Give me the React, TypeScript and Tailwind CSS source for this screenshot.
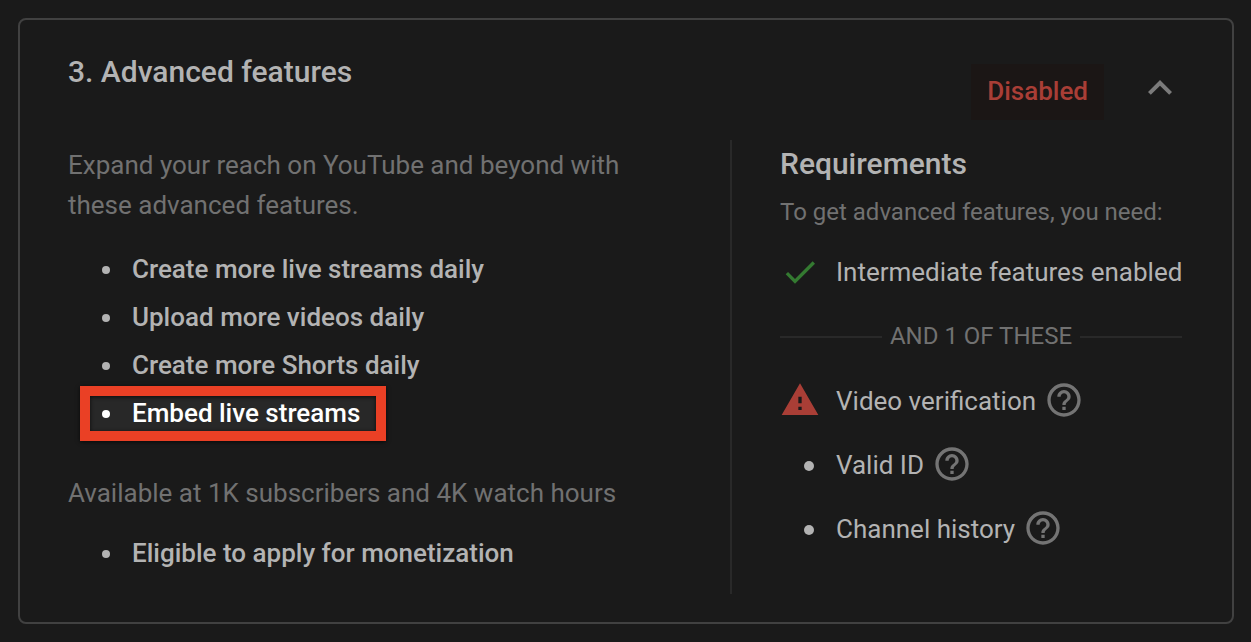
import React from "react";

const limits = [
  { label: "Create more live streams daily", highlighted: false },
  { label: "Upload more videos daily", highlighted: false },
  { label: "Create more Shorts daily", highlighted: false },
  { label: "Embed live streams", highlighted: true },
];

const options = [
  { label: "Video verification", warning: true },
  { label: "Valid ID", warning: false },
  { label: "Channel history", warning: false },
];

function Icon({ d, className }: { d: string; className: string }) {
  return (
    <svg viewBox="0 0 24 24" fill="currentColor" aria-hidden="true" className={className}>
      <path d={d} />
    </svg>
  );
}

const chevronUp = "M12 8l-6 6 1.41 1.41L12 10.83l4.59 4.58L18 14z";
const check = "M9 16.17L4.83 12l-1.42 1.41L9 19 21 7l-1.41-1.41z";
const warning = "M1 21h22L12 2 1 21zm12-3h-2v-2h2v2zm0-4h-2v-4h2v4z";
const help =
  "M11 18h2v-2h-2v2zm1-16C6.48 2 2 6.48 2 12s4.48 10 10 10 10-4.48 10-10S17.52 2 12 2zm0 18c-4.41 0-8-3.59-8-8s3.59-8 8-8 8 3.59 8 8-3.59 8-8 8zm0-14c-2.21 0-4 1.79-4 4h2c0-1.1.9-2 2-2s2 .9 2 2c0 2-3 1.75-3 5h2c0-2.25 3-2.5 3-5 0-2.21-1.79-4-4-4z";

function Feature({ label, highlighted }: { label: string; highlighted: boolean }) {
  return (
    <li
      className={
        highlighted
          ? "relative flex h-12 w-fit items-center gap-[22px] pl-[34px] text-white"
          : "flex h-12 items-center gap-[22px] pl-[34px]"
      }
    >
      {highlighted && (
        <span className="absolute -top-[3px] right-[-26px] -bottom-1 left-3 border-10 border-[#ea4025] bg-[#282828] shadow-[0_1px_4px_rgba(0,0,0,0.7),inset_0_1px_4px_rgba(0,0,0,0.7)]" />
      )}
      <span className="relative mt-[2px] size-2 rounded-full bg-current" />
      <span className="relative">{label}</span>
    </li>
  );
}

export default function App() {
  return (
    <main className="min-h-screen bg-[#1a1a1a] py-[18px] pr-[17px] pl-[18px] font-['Roboto',sans-serif] text-[26px] leading-10 text-[#b3b3b3]">
      <section className="rounded-lg border-2 border-[#414141] px-12 pt-11 pb-7">
        <header className="flex items-start justify-between">
          <h2 className="-mt-3 text-[30px] font-medium">3. Advanced features</h2>
          <div className="flex items-start gap-8">
            <span className="flex h-14 items-center bg-[#1b1615] px-4 pb-[2px] font-medium text-[#a93e36]">
              Disabled
            </span>
            <button type="button" aria-label="Collapse" className="text-[#7b7b7b]">
              <Icon d={chevronUp} className="size-12" />
            </button>
          </div>
        </header>

        <div className="mt-5 flex items-stretch">
          <div className="min-w-0 flex-1 pt-[5px] pb-[17px]">
            <p className="max-w-[600px] text-[#717171]">
              Expand your reach on YouTube and beyond with these advanced features.
            </p>
            <ul className="mt-5 font-medium">
              {limits.map((item) => (
                <Feature key={item.label} {...item} />
              ))}
            </ul>
            <p className="mt-9 text-[#717171]">Available at 1K subscribers and 4K watch hours</p>
            <ul className="mt-4 font-medium">
              <Feature label="Eligible to apply for monetization" highlighted={false} />
            </ul>
          </div>

          <div className="w-[454px] shrink-0 border-l-2 border-[#292929] pt-1 pl-12">
            <h3 className="text-[30px] font-medium">Requirements</h3>
            <p className="mt-2 text-2xl leading-10 whitespace-nowrap text-[#717171]">
              To get advanced features, you need:
            </p>
            <div className="mt-5 flex h-10 items-center gap-4 whitespace-nowrap">
              <Icon d={check} className="size-10 shrink-0 text-[#347a31]" />
              Intermediate features enabled
            </div>
            <div className="mt-6 mr-[2px] flex h-10 items-center gap-2 text-2xl whitespace-nowrap text-[#717171]">
              <span className="mt-[2px] h-[2px] flex-1 bg-[#292929]" />
              AND 1 OF THESE
              <span className="mt-[2px] h-[2px] flex-1 bg-[#292929]" />
            </div>
            <ul className="mt-6 flex flex-col gap-6">
              {options.map((option) => (
                <li key={option.label} className="flex h-10 items-center">
                  <span className="mr-4 flex w-10 items-center justify-end">
                    {option.warning ? (
                      <Icon d={warning} className="size-10 text-[#a93e36]" />
                    ) : (
                      <span className="mt-1 mr-[6px] size-[10px] rounded-full bg-current" />
                    )}
                  </span>
                  <span className="pt-[2px]">{option.label}</span>
                  <button
                    type="button"
                    aria-label={`About ${option.label}`}
                    className="ml-2 text-[#747474]"
                  >
                    <Icon d={help} className="size-10" />
                  </button>
                </li>
              ))}
            </ul>
          </div>
        </div>
      </section>
    </main>
  );
}
